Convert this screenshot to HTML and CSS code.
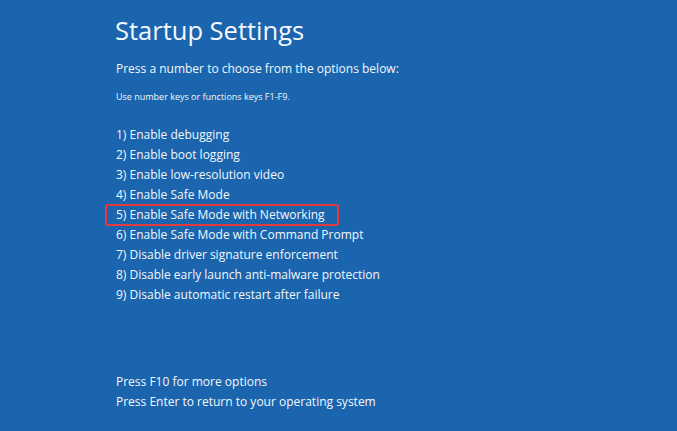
FILE: index.html
```html
<!DOCTYPE html>
<html lang="en">
<head>
<meta charset="utf-8">
<title>Startup Settings</title>
<link rel="stylesheet" href="styles.css">
</head>
<body>
<main class="screen">
  <h1 class="title">Startup Settings</h1>
  <p class="lead">Press a number to choose from the options below:</p>
  <p class="hint">Use number keys or functions keys F1-F9.</p>
  <ol class="options">
    <li>1) Enable debugging</li>
    <li>2) Enable boot logging</li>
    <li>3) Enable low-resolution video</li>
    <li>4) Enable Safe Mode</li>
    <li class="selected"><span class="box">5) Enable Safe Mode with Networking</span></li>
    <li>6) Enable Safe Mode with Command Prompt</li>
    <li>7) Disable driver signature enforcement</li>
    <li>8) Disable early launch anti-malware protection</li>
    <li>9) Disable automatic restart after failure</li>
  </ol>
  <div class="footer">
    <p>Press F10 for more options</p>
    <p>Press Enter to return to your operating system</p>
  </div>
</main>
</body>
</html>
```

FILE: styles.css
```css
html, body {
  margin: 0;
  padding: 0;
  width: 677px;
  height: 431px;
  background: #1a65ae;
  overflow: hidden;
}
.screen {
  box-sizing: border-box;
  height: 431px;
  padding: 13px 0 0 116px;
  display: flex;
  flex-direction: column;
  color: #f4f7fb;
  font-family: "Open Sans", "Noto Sans", sans-serif;
}
.title {
  margin: 0 0 0 -1px;
  font-size: 25.5px;
  font-weight: 400;
  line-height: 34px;
}
.lead {
  margin: 12px 0 0;
  font-size: 12px;
  line-height: 20px;
}
.hint {
  margin: 11px 0 0;
  font-size: 9px;
  line-height: 14px;
}
.options {
  list-style: none;
  margin: 21px 0 0;
  padding: 0;
  font-size: 12px;
  line-height: 20px;
}
.options li {
  display: flex;
  height: 20px;
}
.box {
  display: block;
  margin: -1px 0 -1px -11px;
  padding: 0 12px 0 9px;
  border: 2px solid #e23b3b;
  border-radius: 3px;
  line-height: 18px;
  height: 18px;
}
.footer {
  margin-top: auto;
  padding-bottom: 19px;
  font-size: 12px;
  line-height: 20px;
}
.footer p {
  margin: 0;
}
```
